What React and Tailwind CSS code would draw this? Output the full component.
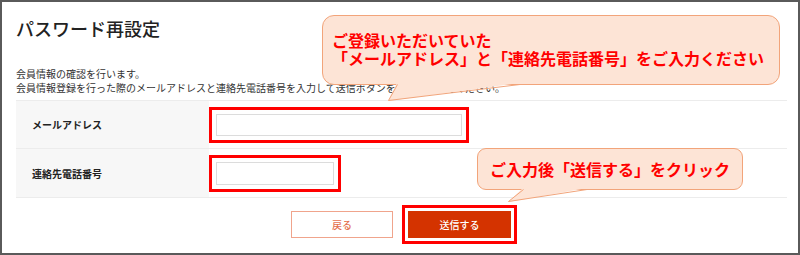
import React from 'react';

const FONT = { fontFamily: '"Noto Sans CJK JP", "Noto Sans", sans-serif' };

function FieldRow({ label, frameClass, last }) {
  return (
    <div className={`flex h-[48px] ${last ? '' : 'border-b border-[#ececec]'}`}>
      <div className="w-[193px] shrink-0 bg-[#f7f7f7] flex items-center pl-[16px] text-[10px] font-bold text-[#222]">
        {label}
      </div>
      <div className="flex-1 flex items-center pl-0 pt-px">
        <div className={`border-[3px] border-[#ff0000] p-[4px] ${frameClass}`}>
          <input className="block w-full h-full border border-[#dcdcdc] bg-white outline-none" />
        </div>
      </div>
    </div>
  );
}

export default function App() {
  return (
    <div style={FONT} className="relative w-[800px] h-[255px] border-2 border-[#5a5a5a] bg-white overflow-hidden pl-[14px] pr-[11px]">
      <h1 className="mt-[13px] text-[18px] leading-[26px] text-[#222] font-medium">パスワード再設定</h1>

      <div className="mt-[26px] text-[10px] leading-[14px] text-[#333]">
        <p>会員情報の確認を行います。</p>
        <p>会員情報登録を行った際のメールアドレスと連絡先電話番号を入力して送信ボタンをクリックしてください。</p>
      </div>

      {/* form table */}
      <div className="mt-[5px] border-t border-b border-[#ececec]">
        <FieldRow label="メールアドレス" frameClass="w-[260px] h-[36px]" />
        <FieldRow label="連絡先電話番号" frameClass="w-[132px] h-[37px]" last />
      </div>

      <div className="mt-[7px] flex justify-center items-center gap-[9px] pl-[5px]">
        <button className="w-[102px] h-[27px] border border-[#f0a48c] bg-white text-[10px] text-[#e4714f] font-medium">戻る</button>
        <div className="border-[3px] border-[#ff0000] p-[3px] bg-white">
          <button className="block w-[103px] h-[27px] bg-[#d43300] text-[10px] text-white font-medium">送信する</button>
        </div>
      </div>

      {/* callouts */}
      <div className="absolute left-[320px] top-[13px] w-[458px] h-[70px] rounded-[12px] border border-[#f2a47a] bg-[#fde4d6]" />
      <div className="absolute left-[475px] top-[146px] w-[266px] h-[42px] rounded-[9px] border border-[#f2a47a] bg-[#fde4d6]" />
      <svg className="absolute left-0 top-0 pointer-events-none" width="796" height="251">
        <polygon points="395,81 386,99 518,81" fill="#fde4d6" />
        <polyline points="395.5,82.5 386.5,98.5 518,82.5" fill="none" stroke="#f2a47a" strokeWidth="1" />
        <polygon points="521,186 506,200 585,186" fill="#fde4d6" />
        <polyline points="521.5,187.5 506.5,199.5 585,187.5" fill="none" stroke="#f2a47a" strokeWidth="1" />
      </svg>
      <div className="absolute left-[330px] top-[29px] text-[16px] leading-[18px] font-bold text-[#ff0000] whitespace-nowrap">
        <p>ご登録いただいていた</p>
        <p>「メールアドレス」と「連絡先電話番号」をご入力ください</p>
      </div>
      <div className="absolute left-[488px] top-[157px] text-[16px] leading-[20px] font-bold text-[#ff0000] whitespace-nowrap">
        ご入力後「送信する」をクリック
      </div>
    </div>
  );
}
